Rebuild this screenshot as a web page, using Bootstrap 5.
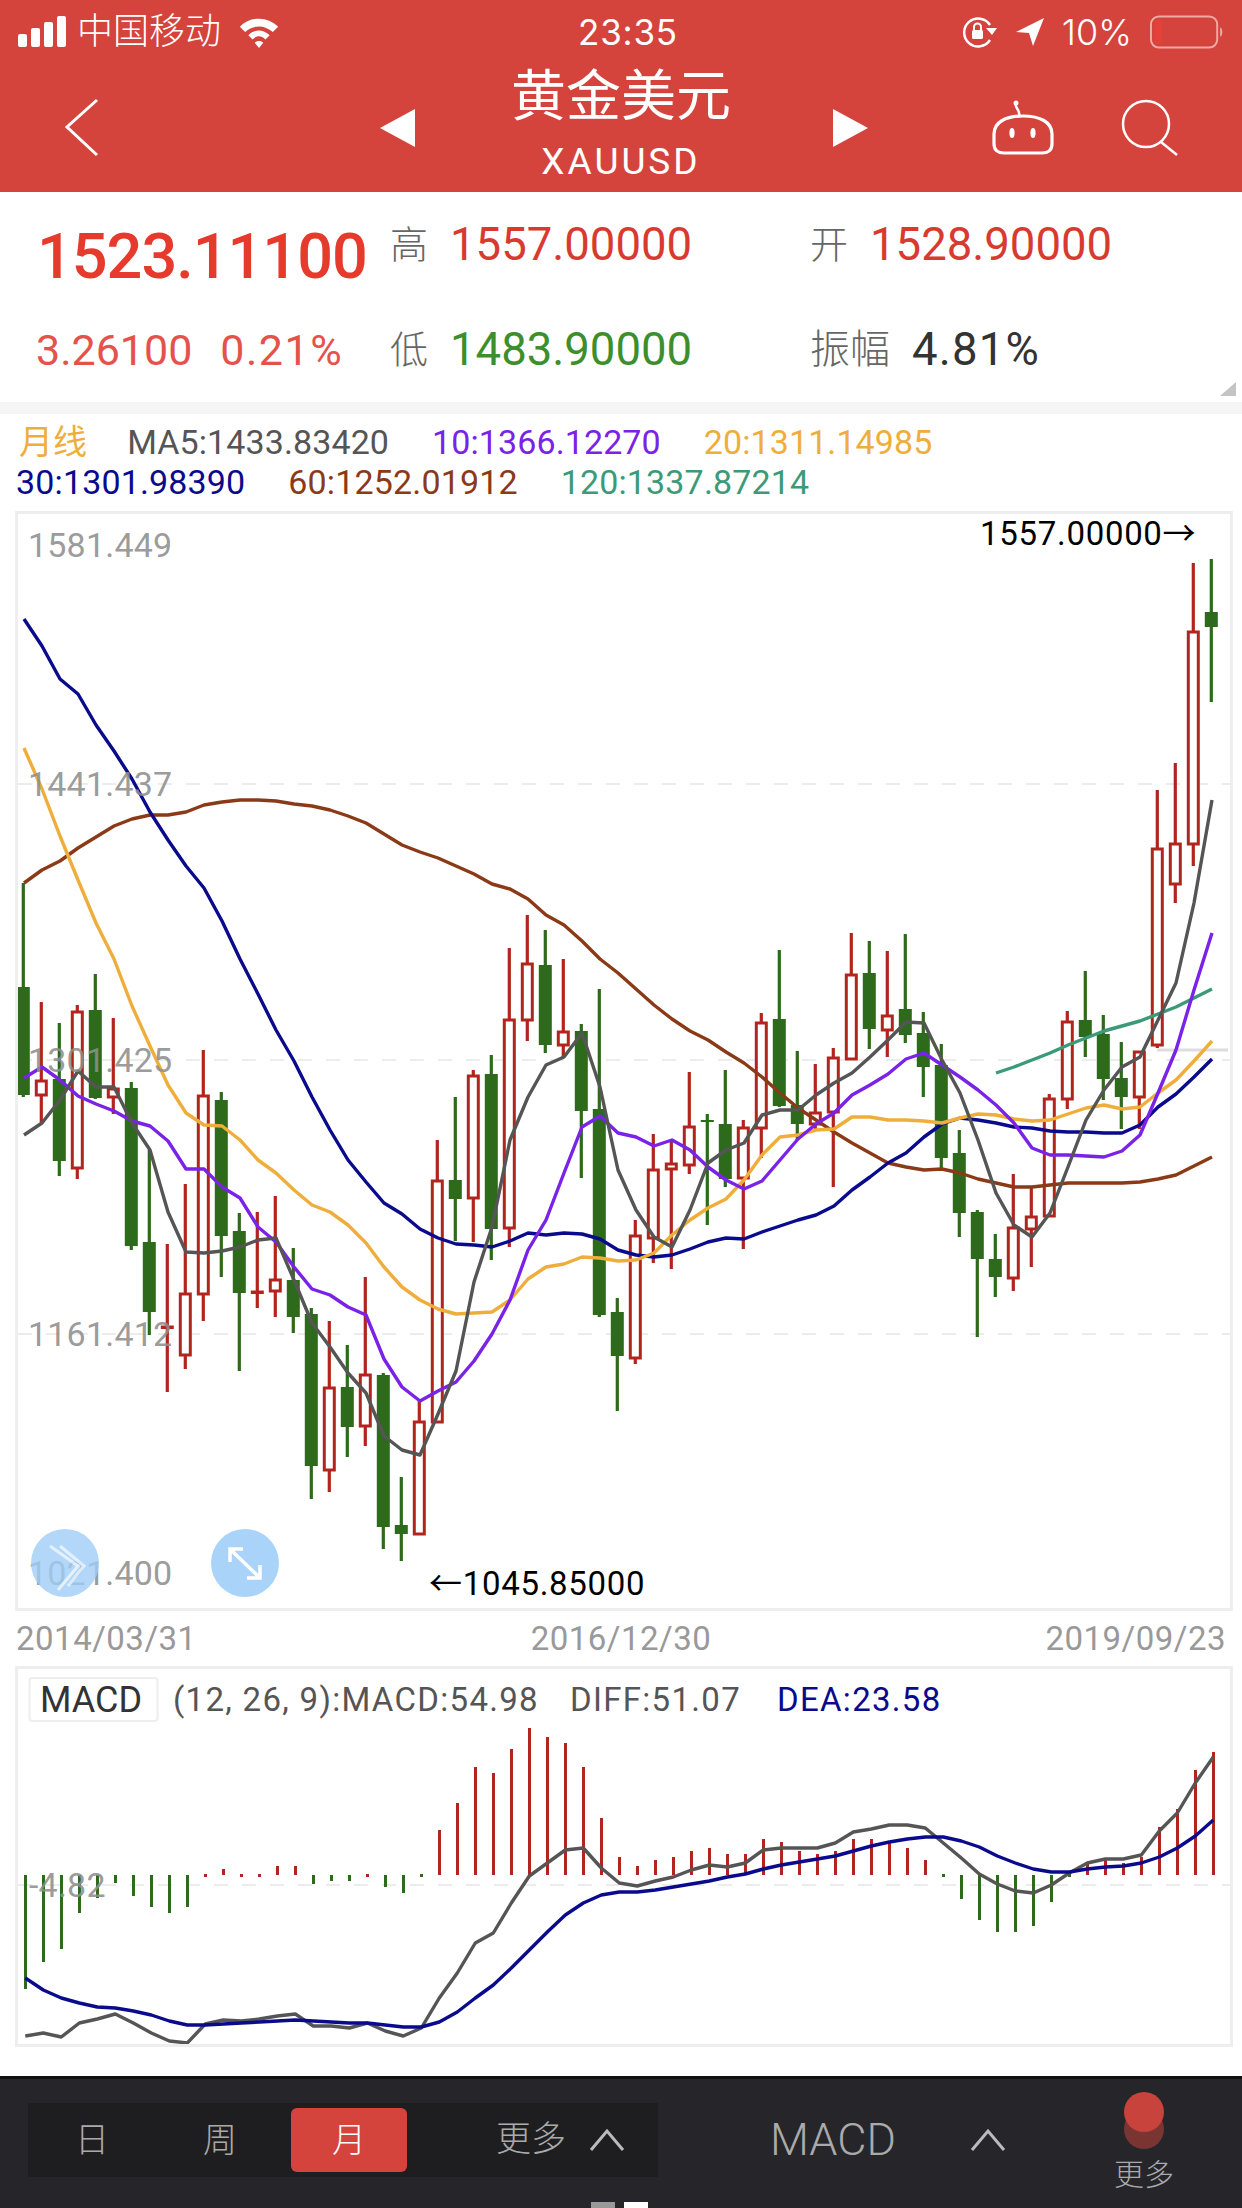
<!DOCTYPE html>
<html>
<head>
    <title>XAUUSD</title>
    <link href="https://cdn.jsdelivr.net/npm/bootstrap@5.3.0/dist/css/bootstrap.min.css" rel="stylesheet">
    <style>
        body { width: 1242px; height: 2208px; overflow: hidden; background: #fff; font-family: Roboto, "Noto Sans CJK SC", sans-serif; }
        .top-red { background: #d5433d; color: #fff; height: 192px; }
        .status-row { height: 64px; font-size: 35px; line-height: 64px; }
        .sb-left { width: 578px; padding-left: 18px; }
        .sb-left svg { margin-right: 11px; }
        .sb-carrier { width: 160px; font-size: 36px; font-weight: 300; }
        .sb-time { width: 104px; font-family: Inter, sans-serif; font-size: 35px; font-weight: 400; letter-spacing: .8px; white-space: nowrap; }
        .sb-right { margin-left: auto; padding-right: 18px; gap: 18px; font-family: Inter, sans-serif; font-size: 36px; font-weight: 300; }
        .title-row { height: 128px; padding: 0 63px 0 64px; }
        .title-nav { width: 488px; margin-left: 282px; }
        .title-center { margin-right: 6px; }
        .title-cn { font-size: 55px; line-height: 58px; letter-spacing: 0; margin-top: -2px; }
        .title-en { font-size: 37px; line-height: 50px; letter-spacing: 3px; margin-top: 12px; }
        .title-icons { margin-left: auto; gap: 67px; }
        .quote-grid { display: grid; grid-template-columns: 390px 420px 1fr; grid-template-rows: 106px 104px; height: 210px; position: relative; }
        .big-price { font-size: 63px; font-weight: 500; letter-spacing: -1px; color: #e53a2c; padding-left: 37px; padding-top: 24px; line-height: 82px; }
        .sub-price { font-size: 43px; color: #e5524c; padding-left: 36px; white-space: nowrap; }
        .sub-price span + span { margin-left: 28px; letter-spacing: 1.5px; }
        .q-cell { font-size: 45.5px; white-space: nowrap; }
        .q-label { font-size: 38px; color: #666; width: 60px; font-weight: 300; }
        .q-label-wide { font-size: 40px; color: #666; width: 102px; font-weight: 300; }
        .q-up { color: #d93a2f; }
        .q-down { color: #3c8f2c; }
        .q-dark { color: #333; letter-spacing: 1.2px; }
        .corner-mark { position: absolute; right: 6px; bottom: 6px; width: 16px; height: 14px; background: #c4c4c4; clip-path: polygon(100% 0, 100% 100%, 0 100%); }
        .band { height: 12px; background: #f5f5f5; }
        .legend-box { height: 97px; font-size: 34px; padding-top: 8px; }
        .legend-row { height: 40px; line-height: 40px; gap: 43px; white-space: nowrap; }
        .legend-row.first { padding-left: 19px; letter-spacing: .1px; }
        .legend-row.second { padding-left: 16px; letter-spacing: .15px; }
        .leg-tag { margin-right: -3px; }
        .c-ma5 { color: #555; }
        .c-ma10 { color: #7b22e8; }
        .c-ma20 { color: #efae3c; }
        .c-ma30 { color: #0a0a8c; }
        .c-ma60 { color: #8b3a17; }
        .c-ma120 { color: #3c9a78; }
        .chart-frame { margin: 0 9px 0 15px; border: 3px solid #eee; }
        .chart-frame svg { display: block; }
        .main-frame { height: 1100px; }
        .macd-frame { height: 381px; }
        .date-row { height: 55px; line-height: 55px; font-size: 33px; letter-spacing: .5px; color: #999; padding: 0 16px 0 16px; }
        .axis-txt { font-family: Roboto, sans-serif; font-size: 34px; letter-spacing: .2px; fill: #8e8e8e; fill-opacity: .9; }
        .mark-txt { font-family: Roboto, "Noto Sans CJK SC", sans-serif; font-size: 33px; letter-spacing: .7px; fill: #000; }
        .macd-txt { font-family: Roboto, sans-serif; font-size: 33px; fill: #555; letter-spacing: 1.3px; }
        .macd-tag { font-family: Roboto, sans-serif; font-size: 36px; fill: #333; }
        .macd-dea { fill: #0a0a8c; }
        .gap-white { height: 29px; }
        .bottom-bar { height: 132px; background: #25252a; border-top: 3px solid #111; color: #aaa; }
        .bar-main { height: 123px; }
        .tab-group { width: 630px; height: 74px; margin: 24px 0 0 28px; background: #1e1e20; font-size: 34px; }
        .tab-cell { width: 128px; text-align: center; line-height: 74px; font-weight: 300; }
        .tab-on { width: 116px; height: 64px; margin: 5px 0 0 7px; line-height: 64px; background: #d5433d; color: #fff; text-align: center; border-radius: 6px; font-weight: 300; }
        .tab-more { margin-left: 89px; line-height: 74px; font-weight: 300; gap: 23px; font-size: 35px; }
        .bar-macd { margin: 24px 0 0 112px; height: 74px; line-height: 74px; font-size: 45px; font-weight: 300; gap: 74px; }
        .bar-side { margin-left: 108px; width: 60px; font-size: 30px; text-align: center; padding-top: 13px; }
        .bar-side div { line-height: 38px; font-weight: 300; margin-top: 7px; white-space: nowrap; }
        .pager { height: 6px; padding-left: 591px; gap: 9px; }
        .pager div { width: 24px; height: 6px; background: #999; }
        .pager div + div { background: #fff; }
    </style>
</head>
<body>
    <div class="top-red">
        <div class="d-flex align-items-center status-row">
            <div class="d-flex align-items-center sb-left">
                <svg width="48" height="32" viewBox="0 0 48 32"><rect x="0" y="18" width="9" height="13" rx="2" fill="#fff"/><rect x="13" y="12" width="9" height="19" rx="2" fill="#fff"/><rect x="26" y="6" width="9" height="25" rx="2" fill="#fff"/><rect x="39" y="0" width="9" height="31" rx="2" fill="#fff"/></svg>
                <span class="sb-carrier">中国移动</span>
                <svg width="44" height="32" viewBox="0 0 40 30"><path d="M2 10 C12 0 28 0 38 10 L33 15 C25 8 15 8 7 15 Z" fill="#fff"/><path d="M10 18 C16 12 24 12 30 18 L26 22 C22 18 18 18 14 22 Z" fill="#fff"/><path d="M16 25 C18 23 22 23 24 25 L20 30 Z" fill="#fff"/></svg>
            </div>
            <div class="sb-time">23:35</div>
            <div class="d-flex align-items-center sb-right">
                <svg width="36" height="32" viewBox="0 0 36 32"><path d="M28 9 A14 14 0 1 0 28 24" fill="none" stroke="#fff" stroke-width="2.5"/><path d="M24 12 L35 12 L30 19 Z" fill="#fff"/><rect x="10" y="14" width="11" height="9" rx="1.5" fill="#fff"/><path d="M12 14 V11 A3.5 3.5 0 0 1 19 11 V14" fill="none" stroke="#fff" stroke-width="2"/></svg>
                <svg width="28" height="28" viewBox="0 0 28 28"><path d="M28 0 L0 14 L13 15 L17 28 Z" fill="#fff"/></svg>
                <span>10%</span>
                <svg width="74" height="34" viewBox="0 0 76 34"><rect x="1" y="1" width="68" height="32" rx="8" fill="none" stroke="#f0a9a5" stroke-width="2"/><rect x="5" y="5" width="7" height="24" rx="3" fill="#e6403a"/><path d="M72 12 C75 13 75 21 72 22 Z" fill="#f0a9a5"/></svg>
            </div>
        </div>
        <div class="d-flex align-items-center title-row">
            <svg width="34" height="60" viewBox="0 0 34 60"><path d="M33 2 L3 29 L33 57" fill="none" stroke="#fff" stroke-width="3"/></svg>
            <div class="d-flex align-items-center justify-content-between title-nav">
                <svg width="35" height="38" viewBox="0 0 35 38"><path d="M35 0 V38 L0 19 Z" fill="#fff"/></svg>
                <div class="text-center title-center">
                    <div class="title-cn">黄金美元</div>
                    <div class="title-en">XAUUSD</div>
                </div>
                <svg width="35" height="38" viewBox="0 0 35 38"><path d="M0 0 V38 L35 19 Z" fill="#fff"/></svg>
            </div>
            <div class="d-flex align-items-center title-icons">
                <svg width="62" height="56" viewBox="0 0 62 56"><path d="M2 34 C2 22 14 16 31 16 C48 16 60 22 60 34 V44 C60 50 56 53 50 53 H12 C6 53 2 50 2 44 Z" fill="none" stroke="#fff" stroke-width="3.2"/><path d="M27 16 C29 10 22 8 24 3" fill="none" stroke="#fff" stroke-width="2.5"/><circle cx="24" cy="3" r="2.5" fill="#fff"/><ellipse cx="20" cy="33" rx="2.6" ry="5" fill="#fff"/><ellipse cx="41" cy="33" rx="2.6" ry="5" fill="#fff"/></svg>
                <svg width="58" height="58" viewBox="0 0 58 58"><circle cx="25" cy="25" r="23" fill="none" stroke="#fff" stroke-width="2.5"/><path d="M40 43 L56 56" stroke="#fff" stroke-width="2.5"/></svg>
            </div>
        </div>
    </div>

    <div class="quote-grid">
        <div class="big-price">1523.11100</div>
        <div class="d-flex align-items-center q-cell"><span class="q-label">高</span><span class="q-up">1557.00000</span></div>
        <div class="d-flex align-items-center q-cell"><span class="q-label">开</span><span class="q-up">1528.90000</span></div>
        <div class="d-flex align-items-center sub-price"><span>3.26100</span><span>0.21%</span></div>
        <div class="d-flex align-items-center q-cell"><span class="q-label">低</span><span class="q-down">1483.90000</span></div>
        <div class="d-flex align-items-center q-cell"><span class="q-label-wide">振幅</span><span class="q-dark">4.81%</span></div>
        <div class="corner-mark"></div>
    </div>
    <div class="band"></div>

    <div class="legend-box">
        <div class="d-flex legend-row first"><span class="c-ma20 leg-tag">月线</span><span class="c-ma5">MA5:1433.83420</span><span class="c-ma10">10:1366.12270</span><span class="c-ma20">20:1311.14985</span></div>
        <div class="d-flex legend-row second"><span class="c-ma30">30:1301.98390</span><span class="c-ma60">60:1252.01912</span><span class="c-ma120">120:1337.87214</span></div>
    </div>

    <div class="chart-frame main-frame">
        <svg id="mainChart" width="1212" height="1094" viewBox="18 514 1212 1094"></svg>
    </div>
    <div class="d-flex justify-content-between date-row"><span>2014/03/31</span><span>2016/12/30</span><span>2019/09/23</span></div>
    <div class="chart-frame macd-frame">
        <svg id="macdChart" width="1212" height="375" viewBox="18 1669 1212 375"></svg>
    </div>
    <div class="gap-white"></div>

    <div class="bottom-bar">
        <div class="d-flex bar-main">
            <div class="d-flex tab-group">
                <div class="tab-cell">日</div>
                <div class="tab-cell">周</div>
                <div class="tab-on">月</div>
                <div class="d-flex align-items-center tab-more"><span>更多</span><svg width="36" height="24" viewBox="0 0 36 24"><path d="M2 22 L18 3 L34 22" fill="none" stroke="#bbb" stroke-width="3"/></svg></div>
            </div>
            <div class="d-flex align-items-center bar-macd"><span>MACD</span><svg width="36" height="24" viewBox="0 0 36 24"><path d="M2 22 L18 3 L34 22" fill="none" stroke="#bbb" stroke-width="3"/></svg></div>
            <div class="bar-side">
                <svg width="40" height="57" viewBox="0 0 40 57"><circle cx="20" cy="37" r="20" fill="#7a3533"/><circle cx="20" cy="20" r="20" fill="#c8433c"/></svg>
                <div>更多</div>
            </div>
        </div>
        <div class="d-flex pager"><div></div><div></div></div>
    </div>

    <script>
        const SVGNS = "http://www.w3.org/2000/svg";
        const RED = "#b3241e", GREEN = "#2d6a1b";

        // color, high, body top, body bottom, low (page pixels)
        const candles = [
            ["g",883,987,1095,1097],["r",1002,1080,1095,1123],["g",1023,1079,1161,1176],["r",1005,1011,1168,1179],["g",974,1010,1098,1099],
            ["r",1018,1088,1097,1114],["g",1082,1088,1246,1250],["g",1150,1242,1312,1335],["r",1244,1326,1327,1392],["r",1184,1293,1355,1369],
            ["r",1050,1095,1294,1321],["g",1092,1100,1236,1277],["g",1213,1231,1293,1371],["r",1212,1291,1292,1308],["r",1196,1279,1291,1317],
            ["g",1248,1280,1317,1333],["g",1308,1314,1466,1499],["r",1321,1387,1470,1492],["g",1345,1387,1427,1457],["r",1277,1374,1426,1446],
            ["g",1373,1375,1527,1549],["g",1477,1525,1534,1561],["r",1401,1421,1534,1534],["r",1140,1180,1422,1422],["g",1097,1180,1199,1241],
            ["r",1070,1075,1198,1242],["g",1055,1074,1229,1260],["r",948,1019,1228,1247],["r",915,963,1020,1041],["g",930,965,1045,1053],
            ["r",959,1031,1045,1057],["g",1024,1031,1111,1178],["g",989,1109,1315,1317],["g",1298,1312,1356,1411],["r",1220,1235,1358,1364],
            ["r",1134,1169,1238,1263],["r",1140,1163,1169,1269],["r",1072,1126,1165,1174],["g",1114,1120,1122,1225],["g",1070,1124,1179,1187],
            ["r",1120,1127,1178,1249],["r",1013,1022,1128,1158],["g",950,1019,1106,1107],["g",1051,1105,1124,1140],["r",1064,1112,1124,1130],
            ["r",1048,1057,1112,1187],["r",933,974,1059,1059],["g",941,973,1029,1049],["r",951,1015,1030,1057],["g",934,1009,1035,1043],
            ["g",1012,1033,1067,1097],["g",1044,1065,1158,1168],["g",1130,1153,1213,1237],["g",1210,1212,1259,1337],["g",1234,1259,1277,1297],
            ["r",1174,1227,1278,1291],["r",1186,1216,1229,1267],["r",1094,1098,1216,1216],["r",1011,1021,1099,1109],["g",971,1020,1037,1057],
            ["g",1015,1034,1079,1100],["g",1042,1078,1097,1129],["r",1051,1051,1097,1129],["r",790,848,1045,1048],["r",763,843,884,903],
            ["r",563,631,844,866],["g",559,612,627,702]
        ];
        const ma5 = [1135,1123,1100,1071,1087,1087,1123,1150,1212,1252,1253,1251,1247,1240,1238,1280,1323,1347,1373,1393,1436,1450,1455,1414,1371,1282,1227,1140,1097,1065,1057,1033,1087,1170,1210,1237,1247,1210,1163,1150,1143,1115,1110,1110,1095,1083,1073,1057,1040,1022,1023,1060,1093,1140,1193,1225,1237,1213,1167,1120,1090,1067,1057,1020,983,903,800];
        const ma10 = [1078,1067,1080,1096,1104,1111,1121,1126,1141,1169,1169,1187,1198,1227,1242,1267,1289,1295,1307,1315,1359,1387,1401,1391,1382,1361,1334,1300,1250,1220,1173,1127,1116,1133,1137,1146,1140,1150,1167,1180,1189,1181,1160,1139,1124,1113,1095,1085,1074,1059,1053,1065,1077,1090,1105,1123,1148,1155,1155,1156,1157,1151,1135,1093,1050,990,933];
        const ma20 = [748,789,836,880,923,959,1006,1046,1085,1113,1125,1126,1140,1160,1173,1190,1205,1212,1225,1243,1267,1287,1300,1309,1314,1313,1312,1300,1279,1267,1264,1257,1258,1261,1260,1253,1235,1220,1208,1199,1180,1155,1137,1135,1130,1129,1117,1117,1120,1120,1121,1123,1118,1114,1115,1119,1121,1120,1114,1108,1105,1109,1107,1093,1080,1061,1041];
        const ma30 = [619,646,679,694,725,751,779,812,840,866,888,921,959,994,1030,1061,1097,1130,1160,1182,1203,1214,1229,1238,1244,1245,1247,1241,1233,1235,1233,1234,1239,1250,1255,1257,1255,1249,1242,1238,1239,1232,1226,1220,1215,1206,1190,1177,1163,1153,1137,1124,1118,1120,1123,1127,1128,1131,1132,1132,1133,1133,1125,1107,1094,1077,1059];
        const ma60 = [883,870,861,848,837,826,819,815,815,812,805,802,800,800,801,804,806,810,816,823,834,845,852,858,866,874,884,889,899,915,925,941,959,973,989,1005,1019,1031,1040,1052,1063,1077,1093,1108,1120,1132,1143,1153,1163,1167,1170,1169,1173,1179,1183,1187,1187,1185,1183,1183,1183,1183,1182,1179,1175,1166,1157];
        const ma120 = [1073,1067,1060,1053,1045,1038,1031,1026,1021,1014,1007,998,989];
        const diff = [2036,2033,2037,2023,2019,2014,2023,2033,2041,2043,2024,2020,2021,2019,2016,2014,2026,2026,2028,2023,2031,2036,2028,1998,1973,1943,1933,1903,1876,1863,1850,1848,1868,1883,1886,1881,1877,1870,1865,1867,1863,1850,1848,1848,1848,1843,1832,1829,1825,1825,1828,1843,1858,1874,1884,1891,1893,1885,1873,1863,1859,1859,1855,1831,1813,1783,1757];
        const dea = [1978,1990,1998,2003,2007,2008,2011,2015,2021,2025,2025,2024,2023,2022,2021,2020,2021,2022,2023,2023,2025,2027,2027,2022,2012,1998,1985,1968,1950,1932,1915,1903,1895,1892,1892,1890,1887,1884,1881,1877,1874,1869,1865,1862,1859,1856,1851,1846,1842,1839,1837,1837,1841,1847,1856,1863,1869,1872,1872,1869,1867,1866,1863,1857,1848,1836,1820];
        // end of each histogram bar; "r"/"g" is a tick too small to have height
        const hist = [1989,1962,1949,1913,1898,1883,1896,1907,1913,1907,"r",1869,"r","r",1866,1866,1884,1881,1881,"r",1887,1893,"g",1830,1803,1767,1773,1749,1728,1737,1743,1767,1818,1857,1866,1860,1857,1851,1848,1854,1854,1839,1842,1851,1854,1851,1839,1839,1842,1848,1860,"g",1899,1920,1932,1932,1926,1902,"g",1863,1860,1863,1857,1827,1809,1770,1752];

        function el(parent, tag, attrs, text) {
            const node = document.createElementNS(SVGNS, tag);
            Object.keys(attrs).forEach((k) => node.setAttribute(k, attrs[k]));
            if (text) node.textContent = text;
            parent.appendChild(node);
            return node;
        }

        function drawLine(svg, values, color, x0, startIndex) {
            const pts = values.map((y, i) => `${x0 + 18 * (i + startIndex)},${y}`).join(" ");
            el(svg, "polyline", { points: pts, fill: "none", stroke: color, "stroke-width": 3.4, "stroke-linejoin": "round" });
        }

        function grid(svg, y) {
            el(svg, "line", { x1: 18, x2: 1230, y1: y, y2: y, stroke: "#e6e6e6", "stroke-width": 1.5, "stroke-dasharray": "14 14" });
        }

        const main = document.getElementById("mainChart");
        [784, 1060, 1334].forEach((y) => grid(main, y));

        candles.forEach((c, i) => {
            const x = 23.3 + 18 * i;
            const color = c[0] === "r" ? RED : GREEN;
            if (c[0] === "r") {
                el(main, "line", { x1: x, x2: x, y1: c[1], y2: c[2], stroke: color, "stroke-width": 3.2 });
                el(main, "line", { x1: x, x2: x, y1: c[3], y2: c[4], stroke: color, "stroke-width": 3.2 });
                el(main, "rect", { x: x - 5, y: c[2] + 1, width: 10, height: Math.max(c[3] - c[2] - 1, 0.5), fill: "#fff", stroke: color, "stroke-width": 3 });
            } else {
                el(main, "line", { x1: x, x2: x, y1: c[1], y2: c[4], stroke: color, "stroke-width": 3.2 });
                el(main, "rect", { x: x - 6.5, y: c[2], width: 13, height: c[3] - c[2], fill: color });
            }
        });

        el(main, "line", { x1: 1157, x2: 1228, y1: 1050, y2: 1050, stroke: "#ddd", "stroke-width": 3 });
        drawLine(main, ma60, "#8b3a17", 24, 0);
        drawLine(main, ma30, "#0a0a8c", 24, 0);
        drawLine(main, ma20, "#efae3c", 24, 0);
        drawLine(main, ma120, "#3c9a78", 24, 54);
        drawLine(main, ma10, "#7b22e8", 24, 0);
        drawLine(main, ma5, "#555", 24, 0);

        [["1581.449", 557], ["1441.437", 796], ["1301.425", 1072], ["1161.412", 1346], ["1021.400", 1585]].forEach((t) => {
            el(main, "text", { x: 28, y: t[1], class: "axis-txt" }, t[0]);
        });
        el(main, "text", { x: 980, y: 545, class: "mark-txt" }, "1557.00000→");
        el(main, "text", { x: 429, y: 1595, class: "mark-txt" }, "←1045.85000");

        // round buttons lying over the chart
        el(main, "circle", { cx: 65, cy: 1563, r: 34, fill: "#9fcdf6", "fill-opacity": ".8" });
        el(main, "path", { d: "M50 1546 L78 1566 L58 1590 M60 1546 L84 1566 L68 1586", fill: "none", stroke: "#fff", "stroke-opacity": ".65", "stroke-width": 3 });
        el(main, "circle", { cx: 245, cy: 1563, r: 34, fill: "#a9d3f8" });
        el(main, "path", { d: "M230 1549 L260 1578 M230 1562 V1549 H243 M260 1565 V1578 H247", fill: "none", stroke: "#fff", "stroke-width": 3.5 });

        const macd = document.getElementById("macdChart");
        grid(macd, 1885);
        hist.forEach((h, i) => {
            const x = 25.5 + 18 * i - 1.5;
            if (h === "r" || h === "g") {
                el(macd, "rect", { x: x, y: 1874, width: 3, height: 3, fill: h === "r" ? RED : GREEN });
            } else if (h < 1875) {
                el(macd, "rect", { x: x, y: h, width: 3, height: 1875 - h, fill: RED });
            } else {
                el(macd, "rect", { x: x, y: 1875, width: 3, height: h - 1875, fill: GREEN });
            }
        });
        drawLine(macd, diff, "#555", 25.3, 0);
        drawLine(macd, dea, "#0a0a8c", 25.3, 0);

        el(macd, "rect", { x: 29.5, y: 1678, width: 128, height: 43, rx: 3, fill: "#fff", stroke: "#eee", "stroke-width": 2 });
        el(macd, "text", { x: 40, y: 1712, class: "macd-tag" }, "MACD");
        el(macd, "text", { x: 173, y: 1711, class: "macd-txt" }, "(12, 26, 9):MACD:54.98");
        el(macd, "text", { x: 570, y: 1711, class: "macd-txt" }, "DIFF:51.07");
        el(macd, "text", { x: 777, y: 1711, class: "macd-txt macd-dea" }, "DEA:23.58");
        el(macd, "text", { x: 29, y: 1897, class: "axis-txt" }, "-4.82");
    </script>
</body>
</html>
